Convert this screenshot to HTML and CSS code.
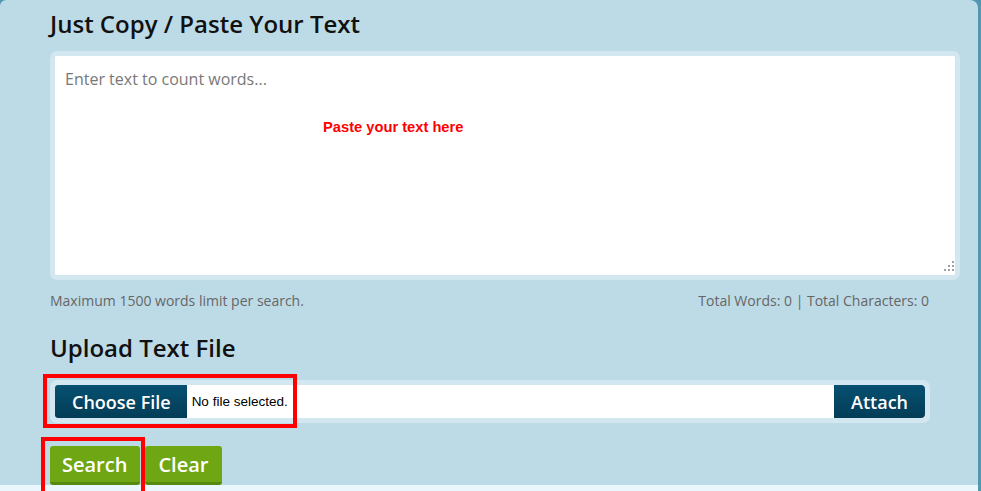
FILE: index.html
```html
<!DOCTYPE html>
<html lang="en">
<head>
<meta charset="utf-8">
<title>Word Counter</title>
<link rel="stylesheet" href="styles.css">
</head>
<body>
<div class="page">
  <div class="main">
    <section class="panel">
      <h2 class="title">Just Copy / Paste Your Text</h2>
      <div class="text-box">
        <textarea class="text-input" placeholder="Enter text to count words..."></textarea>
        <span class="hint">Paste your text here</span>
        <svg class="grip" width="12" height="12" viewBox="0 0 12 12" aria-hidden="true">
          <rect x="9" y="0" width="2" height="2" fill="#9aa0a4"/>
          <rect x="5" y="4" width="2" height="2" fill="#9aa0a4"/>
          <rect x="9" y="4" width="2" height="2" fill="#9aa0a4"/>
          <rect x="1" y="8" width="2" height="2" fill="#9aa0a4"/>
          <rect x="5" y="8" width="2" height="2" fill="#9aa0a4"/>
          <rect x="9" y="8" width="2" height="2" fill="#9aa0a4"/>
        </svg>
      </div>
      <div class="counts">
        <span>Maximum 1500 words limit per search.</span>
        <span>Total Words: 0 | Total Characters: 0</span>
      </div>
      <h2 class="title upload-title">Upload Text File</h2>
      <div class="file-row">
        <span class="btn-dark choose">Choose File</span>
        <span class="file-name">No file selected.</span>
        <span class="file-fill"></span>
        <span class="btn-dark attach">Attach</span>
        <span class="mark mark-file"></span>
      </div>
      <div class="actions">
        <span class="btn-green search">Search<span class="mark mark-search"></span></span>
        <span class="btn-green">Clear</span>
      </div>
    </section>
    <div class="strip"></div>
  </div>
  <div class="edge"></div>
</div>
</body>
</html>
```

FILE: styles.css
```css
html, body {
  margin: 0;
  padding: 0;
}
body {
  width: 981px;
  height: 491px;
  overflow: hidden;
  font-family: "Open Sans", "Liberation Sans", sans-serif;
  background: #4f97b3;
}
.page {
  display: flex;
  height: 491px;
}
.main {
  width: 978px;
  display: flex;
  flex-direction: column;
  background: #4f97b3;
}
.edge {
  flex: 1;
  background: #4f97b3;
}
.panel {
  height: 485px;
  box-sizing: border-box;
  background: #bddbe6;
  border-top-right-radius: 8px;
  border-top-left-radius: 6px;
  padding: 7px 0 0 50px;
}
.strip {
  flex: 1;
  background: #eaf7fc;
}
.title {
  margin: 0;
  font-size: 24px;
  line-height: 34px;
  font-weight: 600;
  color: #111;
}
.text-box {
  position: relative;
  margin-top: 10px;
  width: 910px;
  height: 229px;
  box-sizing: border-box;
  border: 5px solid #d3e7f0;
  border-radius: 7px;
  background: #fff;
}
.text-input {
  display: block;
  width: 100%;
  height: 100%;
  box-sizing: border-box;
  border: 0;
  margin: 0;
  padding: 12px 10px 10px;
  resize: none;
  outline: none;
  font-family: "Open Sans", "Liberation Sans", sans-serif;
  font-size: 16px;
  line-height: 1.42857;
  color: #333;
  background: #fff;
  border-radius: 2px;
}
.text-input::placeholder {
  color: #787878;
}
.hint {
  position: absolute;
  left: 268px;
  top: 63px;
  font-family: "Liberation Sans", Arial, sans-serif;
  font-weight: bold;
  font-size: 14.7px;
  color: #f00;
}
.grip {
  position: absolute;
  right: 0;
  bottom: 2px;
}
.counts {
  display: flex;
  justify-content: space-between;
  width: 879px;
  margin-top: 11px;
  font-size: 14px;
  line-height: 20px;
  color: #666;
}
.upload-title {
  margin-top: 20px;
}
.file-row {
  position: relative;
  display: flex;
  margin-top: 15px;
  width: 880px;
  height: 43px;
  box-sizing: border-box;
  border: 5px solid #d3e7f0;
  border-radius: 7px;
  background: #fff;
}
.btn-dark {
  display: flex;
  align-items: center;
  padding: 0 17px;
  background: linear-gradient(#065071, #033d57);
  color: #fff;
  font-size: 18px;
  font-weight: 600;
}
.choose {
  border-radius: 3px 0 0 3px;
  padding: 0 16px 0 17px;
}
.attach {
  border-radius: 0 4px 4px 0;
}
.file-name {
  display: flex;
  align-items: center;
  padding-left: 5px;
  font-family: "Liberation Sans", Arial, sans-serif;
  font-size: 13.5px;
  color: #000;
}
.file-fill {
  flex: 1;
}
.mark {
  position: absolute;
  box-sizing: border-box;
  border: 4px solid #f00;
}
.mark-file {
  left: -12px;
  top: -11px;
  width: 254px;
  height: 54px;
}
.actions {
  display: flex;
  gap: 5px;
  margin-top: 23px;
}
.btn-green {
  position: relative;
  display: flex;
  align-items: center;
  height: 39px;
  box-sizing: border-box;
  padding: 0 14px 0 13px;
  background: #6fa614;
  border-bottom: 3px solid #578a0c;
  border-radius: 3px;
  color: #fff;
  font-size: 20px;
  font-weight: 600;
}
.search {
  padding: 0 13px 0 12px;
}
.mark-search {
  left: -9px;
  top: -9px;
  width: 104px;
  height: 60px;
}
```
